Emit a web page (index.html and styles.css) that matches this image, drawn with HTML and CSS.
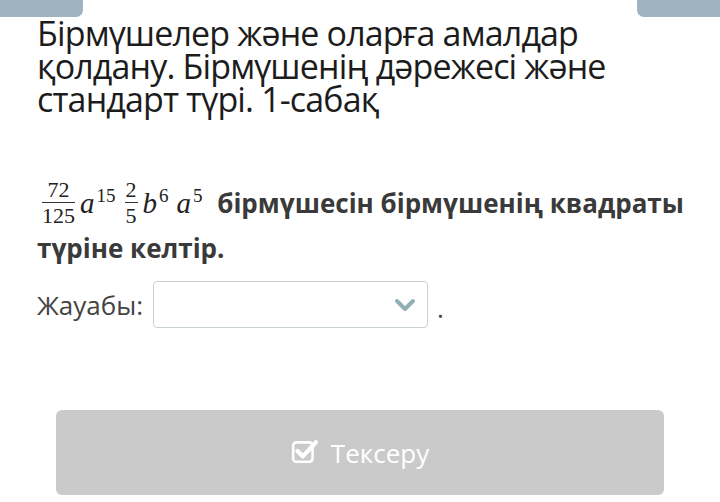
FILE: index.html
```html
<!DOCTYPE html>
<html>
<head>
    <meta charset="utf-8">
    <meta name="viewport" content="width=device-width, initial-scale=1">
    <title>Бірмүшелер</title>
    <link rel="stylesheet" href="styles.css">
</head>
<body>
    <div class="tabs">
        <div class="tab tab-left"></div>
        <div class="tab tab-right"></div>
    </div>

    <section class="lesson">
        <h1 class="title">Бірмүшелер және оларға амалдар қолдану. Бірмүшенің дәрежесі және стандарт түрі. 1-сабақ</h1>

        <p class="task"><span class="math"><span class="frac"><span class="num">72</span><span class="den">125</span></span><i>a</i><sup>15</sup><span class="frac frac-2"><span class="num">2</span><span class="den">5</span></span><i>b</i><sup>6</sup><i class="gap">a</i><sup>5</sup></span> бірмүшесін бірмүшенің квадраты түріне келтір.</p>

        <div class="answer">
            <span class="answer-label">Жауабы:</span>
            <div class="select">
                <svg class="chevron" width="22" height="14" viewBox="0 0 22 14">
                    <path d="M3 3 L11 11 L19 3" fill="none" stroke="#8fb0b5" stroke-width="4" stroke-linecap="round" stroke-linejoin="round"/>
                </svg>
            </div>
            <span class="dot">.</span>
        </div>
    </section>

    <div class="check-wrap">
        <button class="check-btn">
            <svg width="28" height="26" viewBox="0 0 26 24">
                <rect x="2" y="4" width="18" height="18" rx="3" fill="none" stroke="#fff" stroke-width="2.4"/>
                <path d="M6 12 L11 17 L23 4" fill="none" stroke="#fff" stroke-width="4" stroke-linecap="round" stroke-linejoin="round"/>
            </svg>
            <span>Тексеру</span>
        </button>
    </div>
</body>
</html>
```

FILE: styles.css
```css
body{
    margin: 0;
    padding: 0;
    background-color: #fff;
    font-family: "Open Sans", "Noto Sans", sans-serif;
    color: #222;
    overflow: hidden;}

.tabs{
    display: flex;
    justify-content: space-between;
    height: 17px;}

.tab{
    width: 83px;
    height: 17px;
    background-color: #a0b3c0;}

.tab-left{
    border-bottom-right-radius: 7px;}

.tab-right{
    border-bottom-left-radius: 7px;}

.lesson{
    padding: 0 26px 0 37px;}

.title{
    margin: 0;
    font-size: 34px;
    font-weight: 400;
    line-height: 33px;
    letter-spacing: -0.85px;
    color: #1c1c1c;}

.task{
    margin: 64px 0 0 0;
    font-size: 26px;
    font-weight: 700;
    line-height: 45px;
    color: #3a3a3a;}

.math{
    font-family: "Liberation Serif", "DejaVu Serif", serif;
    font-weight: 400;
    color: #222;
    font-size: 29px;
    margin-left: 5px;
    margin-right: 8px;}

.math i{
    font-style: italic;
    margin: 0 2px 0 5px;}

.math i.gap{
    margin-left: 8px;}

.math sup{
    font-size: 19px;
    vertical-align: 11px;
    line-height: 0;}

.frac{
    display: inline-flex;
    flex-direction: column;
    align-items: center;
    vertical-align: 16px;
    font-size: 22px;
    line-height: 20px;}

.frac-2{
    margin-left: 9px;}

.frac .num{
    border-bottom: 1px solid #333;
    padding: 0 1px 2px;
    align-self: stretch;
    text-align: center;}

.frac .den{
    padding-top: 3px;}

.answer{
    display: flex;
    align-items: center;
    margin-top: 10px;
    font-size: 26px;
    color: #444;}

.select{
    width: 275px;
    height: 47px;
    margin-left: 10px;
    border: 1px solid #c9d2d3;
    border-radius: 4px;
    display: flex;
    align-items: center;
    justify-content: flex-end;
    padding-right: 11px;
    box-sizing: border-box;}

.dot{
    margin-left: 9px;
    margin-top: 6px;}

.check-wrap{
    padding: 82px 56px 0;}

.check-btn{
    width: 100%;
    height: 85px;
    border: none;
    border-radius: 6px;
    background-color: #cacaca;
    color: #fff;
    font-family: "Open Sans", "Noto Sans", sans-serif;
    font-size: 26px;
    display: flex;
    align-items: center;
    justify-content: center;
    gap: 12px;}

.check-btn svg{
    margin-top: -4px;}
```
